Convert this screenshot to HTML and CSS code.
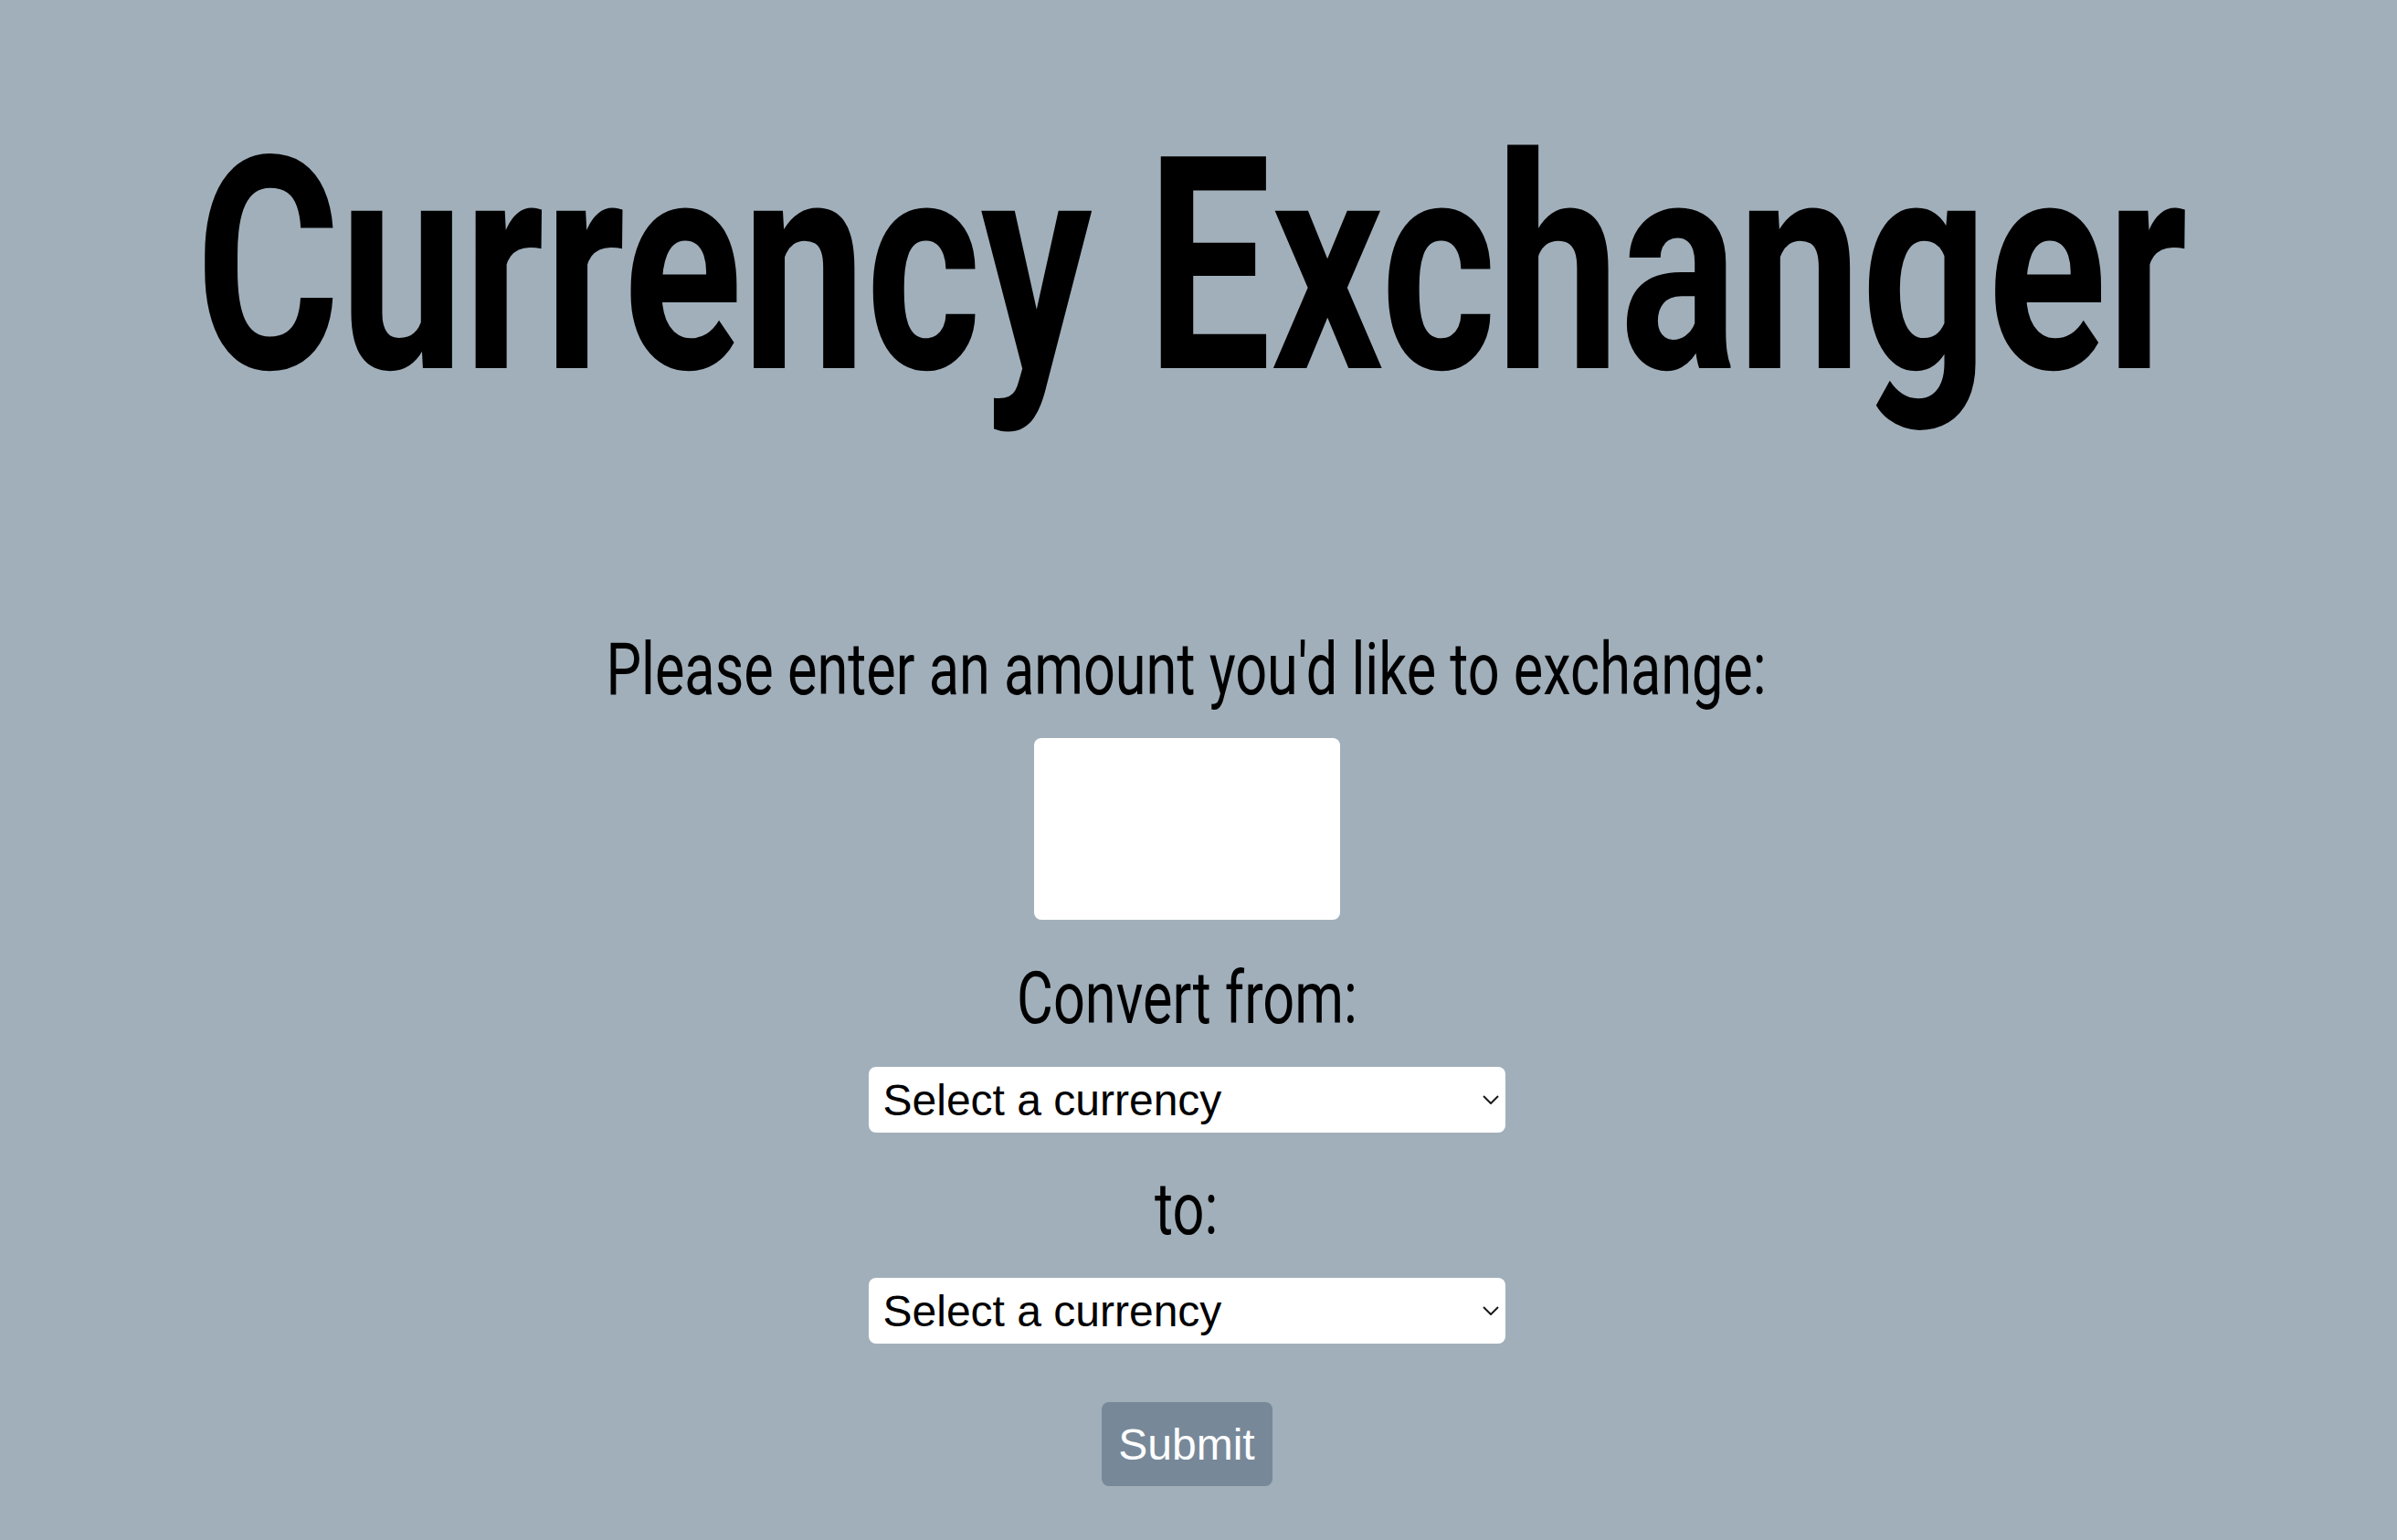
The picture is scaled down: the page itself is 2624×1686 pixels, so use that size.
FILE: index.html
```html
<!DOCTYPE html>
<html lang="en">
<head>
<meta charset="utf-8">
<title>Currency Exchanger</title>
<link rel="stylesheet" href="styles.css">
</head>
<body>
<main class="page">
  <h1 class="title"><span class="squeeze squeeze-title">Currency Exchanger</span></h1>
  <form class="form">
    <label class="label label-amount" for="amount"><span class="squeeze">Please enter an amount you'd like to exchange:</span></label>
    <input class="amount" id="amount" type="text">
    <label class="label label-from" for="from"><span class="squeeze">Convert from:</span></label>
    <div class="select-wrap">
      <select class="select" id="from"><option>Select a currency</option></select>
      <svg class="chevron" width="18" height="10" viewBox="0 0 18 10"><path d="M1 1 L9 9 L17 1" fill="none" stroke="#1a1a1a" stroke-width="2"/></svg>
    </div>
    <label class="label label-to" for="to"><span class="squeeze">to:</span></label>
    <div class="select-wrap">
      <select class="select" id="to"><option>Select a currency</option></select>
      <svg class="chevron" width="18" height="10" viewBox="0 0 18 10"><path d="M1 1 L9 9 L17 1" fill="none" stroke="#1a1a1a" stroke-width="2"/></svg>
    </div>
    <button class="submit" type="button">Submit</button>
  </form>
</main>
</body>
</html>
```
FILE: styles.css
```css
html, body {
  margin: 0;
  padding: 0;
  background: #a1afba;
}
body {
  min-height: 1686px;
}
.page {
  display: flex;
  flex-direction: column;
  align-items: center;
  padding: 129px 26px 0 0;
  font-family: Roboto, "Liberation Sans", sans-serif;
  color: #000;
  overflow: hidden;
}
.squeeze {
  display: inline-block;
  white-space: nowrap;
  transform: scaleX(0.775);
  transform-origin: center;
}
.title {
  margin: 0;
  font-size: 326px;
  line-height: 326px;
  font-weight: 700;
  padding-left: 10px;
  white-space: nowrap;
}
.squeeze-title {
  transform: scaleX(0.741);
  margin: 0 -375px;
}
.form {
  display: flex;
  flex-direction: column;
  align-items: center;
  margin-top: 239px;
}
.label {
  font-size: 79px;
  line-height: 79px;
  font-weight: 400;
}
.amount {
  margin-top: 35px;
  width: 335px;
  height: 199px;
  box-sizing: border-box;
  border: none;
  border-radius: 8px;
  background: #fff;
  outline: none;
}
.label-from {
  margin-top: 47px;
}
.select-wrap {
  position: relative;
  margin-top: 35px;
}
.label-to {
  margin-top: 45px;
}
.select {
  appearance: none;
  -webkit-appearance: none;
  display: block;
  width: 697px;
  height: 72px;
  box-sizing: border-box;
  border: none;
  border-radius: 8px;
  background: #fff;
  padding: 0 0 0 16px;
  font-family: "Liberation Sans", Arial, sans-serif;
  font-size: 48px;
  color: #000;
}
.chevron {
  position: absolute;
  right: 7px;
  top: 31px;
}
.submit {
  margin-top: 64px;
  width: 187px;
  height: 92px;
  border: none;
  border-radius: 8px;
  background: #778899;
  color: #fff;
  font-family: "Liberation Sans", Arial, sans-serif;
  font-size: 48px;
  padding: 0;
}
```
